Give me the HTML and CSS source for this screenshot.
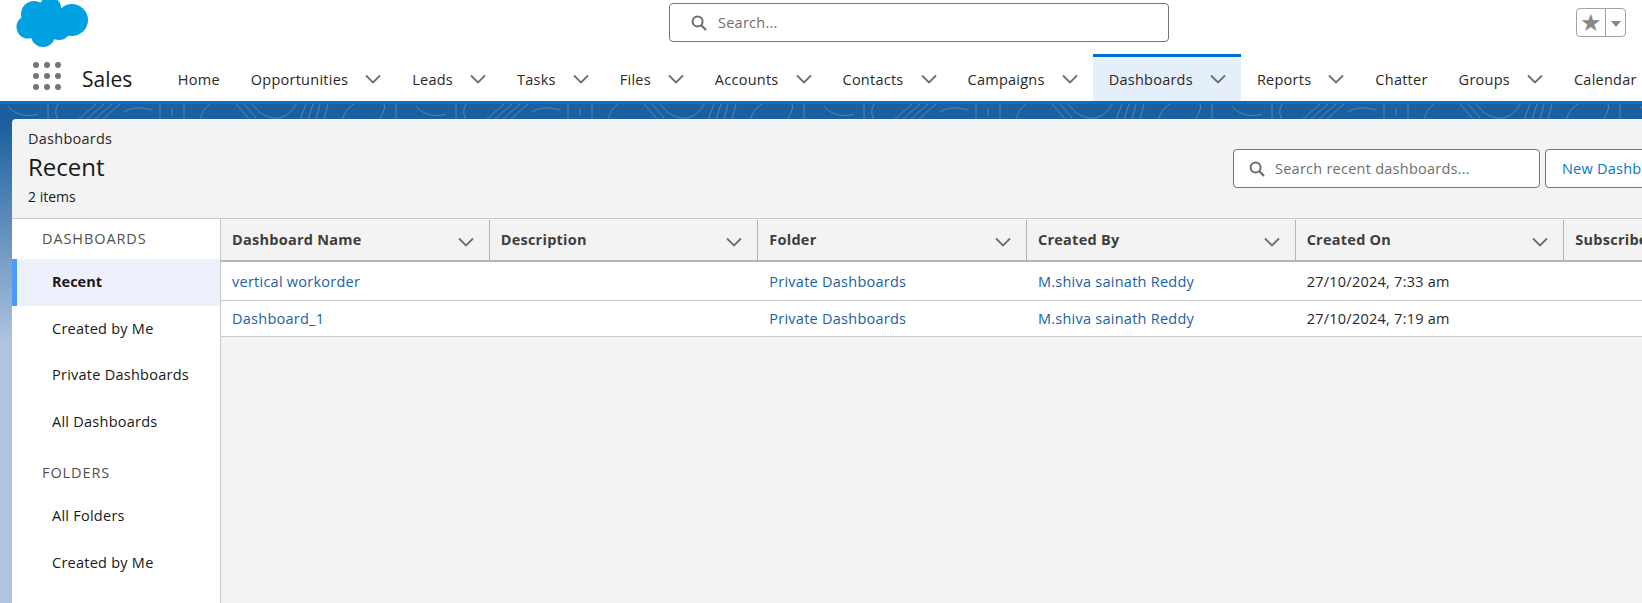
FILE: index.html
```html
<!DOCTYPE html>
<html lang="en">
<head>
    <meta charset="UTF-8">
    <title>Recent | Dashboards | Salesforce</title>
    <link rel="stylesheet" href="styles.css">
</head>
<body>
    <svg width="0" height="0" class="icon-defs">
        <symbol id="chevron" viewBox="0 0 16 10"><polyline points="1,1.5 8,8.5 15,1.5" fill="none" stroke="#706e6b" stroke-width="1.8"/></symbol>
        <symbol id="search" viewBox="0 0 16 16"><circle cx="6.6" cy="6.6" r="5" fill="none" stroke="#706e6b" stroke-width="2"/><line x1="10.3" y1="10.3" x2="15" y2="15" stroke="#706e6b" stroke-width="2.2"/></symbol>
    </svg>

    <header class="top-bar">
        <svg class="logo" width="72" height="51" viewBox="0 0 72 51">
            <g fill="#00a1e0">
                <circle cx="18" cy="14" r="13"/>
                <circle cx="34" cy="8" r="11"/>
                <circle cx="56" cy="20" r="16"/>
                <circle cx="43" cy="28" r="12"/>
                <circle cx="27" cy="35" r="12"/>
                <circle cx="12" cy="27" r="11.5"/>
                <rect x="16" y="10" width="30" height="20"/>
            </g>
        </svg>
        <div class="global-search">
            <svg class="search-icon" width="16" height="16"><use href="#search"/></svg>
            <span class="placeholder">Search...</span>
        </div>
        <div class="fav-btn">
            <span class="fav-star">&#9733;</span>
            <span class="fav-caret"></span>
        </div>
    </header>

    <nav class="nav-bar">
        <div class="waffle">
            <i></i><i></i><i></i><i></i><i></i><i></i><i></i><i></i><i></i>
        </div>
        <span class="app-name">Sales</span>
        <a class="nav-item">Home</a>
        <a class="nav-item">Opportunities<svg class="chev"><use href="#chevron"/></svg></a>
        <a class="nav-item">Leads<svg class="chev"><use href="#chevron"/></svg></a>
        <a class="nav-item">Tasks<svg class="chev"><use href="#chevron"/></svg></a>
        <a class="nav-item">Files<svg class="chev"><use href="#chevron"/></svg></a>
        <a class="nav-item">Accounts<svg class="chev"><use href="#chevron"/></svg></a>
        <a class="nav-item">Contacts<svg class="chev"><use href="#chevron"/></svg></a>
        <a class="nav-item">Campaigns<svg class="chev"><use href="#chevron"/></svg></a>
        <a class="nav-item active">Dashboards<svg class="chev"><use href="#chevron"/></svg></a>
        <a class="nav-item">Reports<svg class="chev"><use href="#chevron"/></svg></a>
        <a class="nav-item">Chatter</a>
        <a class="nav-item">Groups<svg class="chev"><use href="#chevron"/></svg></a>
        <a class="nav-item">Calendar</a>
    </nav>

    <main class="stage">
        <!-- contour lines behind the panel -->
        <svg class="stage-bg" width="1642" height="60">
            <defs>
                <pattern id="contour" width="408" height="60" patternUnits="userSpaceOnUse">
                    <g fill="none" stroke="#4f86bd" stroke-width="1">
                        <path d="M8 2c6 8 18 12 30 8"/>
                        <path d="M48 0v16M58 0c-3 6-3 10 0 16"/>
                        <path d="M78 16l18-16M86 16l18-16M94 16l18-16M102 16l18-16"/>
                        <path d="M124 8c8-5 18-5 28-2"/>
                        <path d="M160 0v16M172 4v8M184 0v16"/>
                        <path d="M200 16c2-6 4-12 10-16"/>
                        <path d="M236 0l14 16M244 0l12 14M252 0c6 8 14 14 24 14s16-6 20-14"/>
                        <path d="M300 16l6-16M308 16l5-16M316 16l4-16M324 16l4-16"/>
                        <path d="M342 16c2-6 5-12 12-16"/>
                        <path d="M380 16c2-6 6-12 4-16M396 0v16"/>
                    </g>
                </pattern>
            </defs>
            <rect width="1642" height="60" fill="url(#contour)"/>
        </svg>

        <section class="panel">
            <div class="list-head">
                <div class="list-title">
                    <div class="crumb">Dashboards</div>
                    <h1>Recent</h1>
                    <div class="count">2 items</div>
                </div>
                <div class="list-actions">
                    <div class="list-search">
                        <svg class="search-icon" width="16" height="16"><use href="#search"/></svg>
                        <span class="placeholder">Search recent dashboards...</span>
                    </div>
                    <button class="new-btn">New Dashboard</button>
                </div>
            </div>

            <div class="list-body">
                <aside class="side-nav">
                    <h2>DASHBOARDS</h2>
                    <a class="side-item selected">Recent</a>
                    <a class="side-item">Created by Me</a>
                    <a class="side-item">Private Dashboards</a>
                    <a class="side-item">All Dashboards</a>
                    <h2 class="folders">FOLDERS</h2>
                    <a class="side-item">All Folders</a>
                    <a class="side-item">Created by Me</a>
                </aside>

                <div class="table-wrap">
                    <table class="dash-table">
                        <thead>
                            <tr>
                                <th><div class="th-in">Dashboard Name<svg class="chev"><use href="#chevron"/></svg></div></th>
                                <th><div class="th-in">Description<svg class="chev"><use href="#chevron"/></svg></div></th>
                                <th><div class="th-in">Folder<svg class="chev"><use href="#chevron"/></svg></div></th>
                                <th><div class="th-in">Created By<svg class="chev"><use href="#chevron"/></svg></div></th>
                                <th><div class="th-in">Created On<svg class="chev"><use href="#chevron"/></svg></div></th>
                                <th><div class="th-in">Subscribed<svg class="chev"><use href="#chevron"/></svg></div></th>
                            </tr>
                        </thead>
                        <tbody>
                            <tr class="row-a">
                                <td><a>vertical workorder</a></td>
                                <td></td>
                                <td><a>Private Dashboards</a></td>
                                <td><a>M.shiva sainath Reddy</a></td>
                                <td>27/10/2024, 7:33 am</td>
                                <td></td>
                            </tr>
                            <tr class="row-b">
                                <td><a>Dashboard_1</a></td>
                                <td></td>
                                <td><a>Private Dashboards</a></td>
                                <td><a>M.shiva sainath Reddy</a></td>
                                <td>27/10/2024, 7:19 am</td>
                                <td></td>
                            </tr>
                        </tbody>
                    </table>
                </div>
            </div>
        </section>
    </main>
</body>
</html>
```

FILE: styles.css
```css
html, body {
    margin: 0;
    padding: 0;
    height: 100%;
    overflow: hidden;
}

body {
    font-family: "Open Sans", "Noto Sans", sans-serif;
    font-size: 14.5px;
    letter-spacing: 0.25px;
    color: #181818;
    background: #fff;
}

.icon-defs {
    position: absolute;
}

.top-bar {
    height: 51px;
    display: flex;
    align-items: flex-start;
    overflow: hidden;
}

.logo {
    margin-left: 16px;
    flex: none;
}

.global-search {
    width: 500px;
    height: 39px;
    margin: 3px 0 0 581px;
    box-sizing: border-box;
    border: 1px solid #747474;
    border-radius: 4px;
    display: flex;
    align-items: center;
    padding-left: 21px;
}

.search-icon {
    flex: none;
    margin-right: 11px;
}

.placeholder {
    color: #706e6b;
}

.fav-btn {
    width: 50px;
    height: 29px;
    margin: 8px 0 0 407px;
    box-sizing: border-box;
    border: 1px solid #a5a3a1;
    border-radius: 4px;
    display: flex;
}

.fav-star {
    width: 28px;
    border-right: 1px solid #a5a3a1;
    color: #8a8886;
    font-size: 24px;
    letter-spacing: 0;
    line-height: 26px;
    text-align: center;
}

.fav-caret {
    width: 0;
    height: 0;
    margin: 12px 0 0 5px;
    border-left: 5px solid transparent;
    border-right: 5px solid transparent;
    border-top: 6px solid #8a8886;
}

.nav-bar {
    height: 50px;
    border-bottom: 3px solid #0070d2;
    display: flex;
    align-items: stretch;
    white-space: nowrap;
    overflow: hidden;
}

.waffle {
    width: 28px;
    height: 28px;
    margin: 11px 0 0 33px;
    display: grid;
    grid-template-columns: repeat(3, 6px);
    grid-auto-rows: 6px;
    justify-content: space-between;
    align-content: space-between;
    flex: none;
}

.waffle i {
    background: #747474;
    border-radius: 50%;
}

.app-name {
    font-size: 21px;
    letter-spacing: 0;
    line-height: 56px;
    margin: 0 30px 0 21px;
}

.nav-item {
    display: flex;
    align-items: center;
    margin-top: 3px;
    padding: 0 15.5px;
    border-top: 3px solid transparent;
    color: #2b2826;
}

.nav-item .chev {
    width: 16px;
    height: 10px;
    margin-left: 17px;
    flex: none;
}

.nav-item.active {
    background: #e5eff9;
    border-top-color: #0070d2;
}

.stage {
    position: relative;
    height: 499px;
    padding: 15px 0 0 12px;
    box-sizing: border-box;
    background: linear-gradient(#1b5f9f 0, #1b5f9f 20px, #b0c4df 240px);
    display: flex;
}

.stage-bg {
    position: absolute;
    top: 0;
    left: 0;
}

.panel {
    position: relative;
    flex: 1;
    min-width: 0;
    background: #f3f3f3;
    border-top-left-radius: 4px;
    overflow: hidden;
}

.list-head {
    width: 1700px;
    height: 100px;
    box-sizing: border-box;
    padding: 11px 21px 0 16px;
    display: flex;
    justify-content: space-between;
    border-bottom: 1px solid #c9c9c9;
}

.crumb {
    line-height: 18px;
    color: #2b2826;
}

h1 {
    margin: 0;
    font-size: 24px;
    font-weight: 400;
    letter-spacing: 0;
    line-height: 37px;
}

.count {
    font-size: 14px;
    letter-spacing: 0;
    line-height: 24px;
}

.list-actions {
    display: flex;
    gap: 5px;
    margin-top: 19px;
    align-items: flex-start;
}

.list-search {
    width: 307px;
    height: 39px;
    box-sizing: border-box;
    background: #fff;
    border: 1px solid #747474;
    border-radius: 4px;
    display: flex;
    align-items: center;
    padding-left: 15px;
}

.list-search .search-icon {
    margin-right: 10px;
}

.new-btn {
    width: 146px;
    height: 39px;
    font: inherit;
    letter-spacing: inherit;
    color: #0176d3;
    background: #fff;
    border: 1px solid #747474;
    border-radius: 4px;
}

.list-body {
    display: flex;
    height: 400px;
}

.side-nav {
    width: 208px;
    flex: none;
    background: #fff;
    border-right: 1px solid #c9c9c9;
}

.side-nav h2 {
    margin: 0;
    height: 40px;
    padding-left: 30px;
    font-size: 14.5px;
    font-weight: 400;
    line-height: 39px;
    letter-spacing: 0.9px;
    color: #514f4d;
}

.side-nav h2.folders {
    height: 45px;
    line-height: 49px;
    margin-top: 3px;
}

.side-item {
    display: block;
    height: 46.6px;
    line-height: 46.6px;
    padding-left: 40px;
    color: #181818;
}

.side-item.selected {
    padding-left: 35px;
    border-left: 5px solid #4a9bff;
    background: #eef1fb;
    font-weight: 700;
    letter-spacing: 0;
}

.table-wrap {
    flex: 1;
    min-width: 0;
    overflow: hidden;
}

.dash-table {
    width: 1612px;
    table-layout: fixed;
    border-collapse: collapse;
}

.dash-table th {
    height: 41px;
    padding: 0;
    text-align: left;
    font-weight: 700;
    color: #3e3e3c;
    border-bottom: 2px solid #b5b5b5;
}

.th-in {
    height: 40px;
    box-sizing: border-box;
    padding: 0 15px 0 11px;
    display: flex;
    align-items: center;
    justify-content: space-between;
    border-right: 1px solid #b5b5b5;
}

.th-in .chev {
    width: 16px;
    height: 10px;
    margin-top: 4px;
}

.dash-table td {
    padding: 0 0 0 11px;
    background: #fff;
    border-bottom: 1px solid #c9c9c9;
    color: #2b2826;
}

.row-a td {
    height: 38px;
}

.row-b td {
    height: 35px;
}

.dash-table a {
    color: #1b5fa8;
}
```
